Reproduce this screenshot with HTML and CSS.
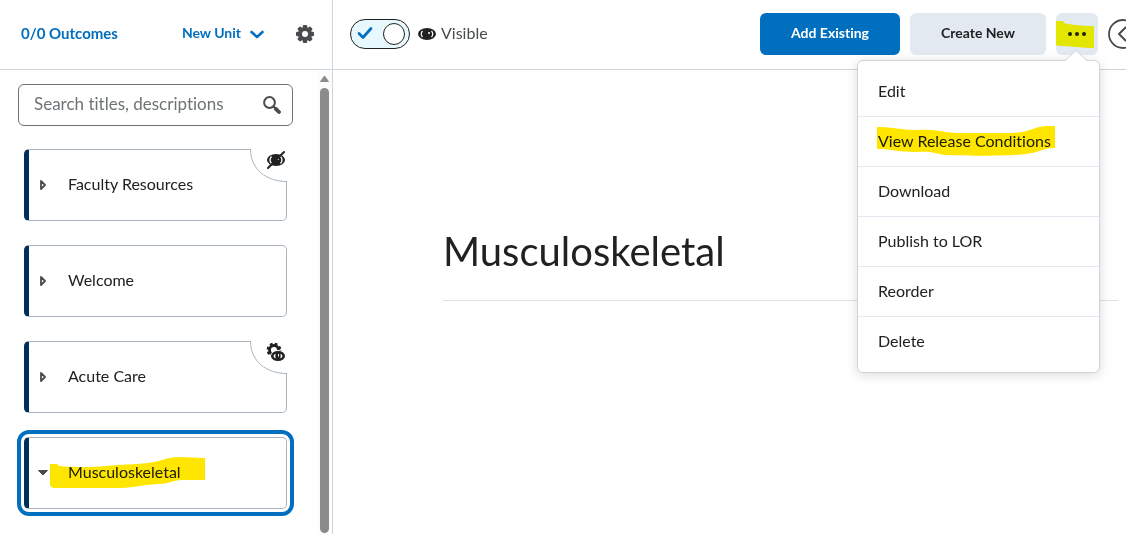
FILE: index.html
```html
<!DOCTYPE html>
<html lang="en">
<head>
<meta charset="utf-8">
<meta name="viewport" content="width=device-width, initial-scale=1">
<title>Musculoskeletal</title>
<link rel="stylesheet" href="styles.css">
</head>
<body>
<div class="app">
  <aside class="sidebar">
    <header class="bar sidebar-bar">
      <a class="outcomes" href="#outcomes">0/0 Outcomes</a>
      <button class="new-unit" type="button"><span class="label">New Unit</span>
        <svg width="14" height="9" viewBox="0 0 14 9"><path d="M1.5 2l5.5 5 5.5-5" fill="none" stroke="#006fbf" stroke-width="2.6" stroke-linecap="round" stroke-linejoin="round"/></svg>
      </button>
      <button class="icon-button" type="button" aria-label="Settings">
        <svg width="18" height="18" viewBox="0 0 18 18"><g fill="#494c4e"><rect x="6.8" width="4.4" height="18" rx="1.2"/><rect x="6.8" width="4.4" height="18" rx="1.2" transform="rotate(45 9 9)"/><rect x="6.8" width="4.4" height="18" rx="1.2" transform="rotate(90 9 9)"/><rect x="6.8" width="4.4" height="18" rx="1.2" transform="rotate(135 9 9)"/><circle cx="9" cy="9" r="7"/></g><circle cx="9" cy="9" r="3" fill="#fff"/></svg>
      </button>
    </header>
    <div class="sidebar-body">
      <div class="sidebar-content">
        <form class="search">
          <input class="search-input" type="text" aria-label="Search titles, descriptions" placeholder="Search titles, descriptions">
          <button class="icon-button" type="button" aria-label="Search">
            <svg width="18" height="18" viewBox="0 0 18 18"><circle cx="6.5" cy="6.5" r="5.4" fill="none" stroke="#494c4e" stroke-width="2"/><path d="M10.5 10.5l2 2" stroke="#494c4e" stroke-width="2"/><path d="M12.8 12.8l3.2 3.2" stroke="#494c4e" stroke-width="3.8" stroke-linecap="round"/></svg>
          </button>
        </form>
        <nav class="units" aria-label="Units">
          <button class="unit" type="button">
            <svg class="caret" width="10" height="12" viewBox="0 0 10 12"><path d="M3 2l4 4-4 4z" fill="#fff" stroke="#494c4e" stroke-width="1.8" stroke-linejoin="round"/></svg>
            <span class="unit-name">Faculty Resources</span>
            <svg class="notch" width="38" height="34" viewBox="0 0 38 34"><path d="M1.500 0H38V32.500C17 32.500 1.500 20 1.500 0z" fill="#fff"/><path d="M1.500 0C1.500 20 17 32.500 38 32.500" fill="none" stroke="#aab4be"/>
              <ellipse cx="27" cy="11" rx="9" ry="6" fill="#202122"/><path d="M22.500 7.500q-3 3.500 0 7M31.500 7.500q3 3.500 0 7" fill="none" stroke="#fff" stroke-width="1.300"/><circle cx="29" cy="10" r="1" fill="#fff"/><path d="M19 19L35 3" stroke="#202122" stroke-width="2" stroke-linecap="round"/></svg>
          </button>
          <button class="unit" type="button">
            <svg class="caret" width="10" height="12" viewBox="0 0 10 12"><path d="M3 2l4 4-4 4z" fill="#fff" stroke="#494c4e" stroke-width="1.8" stroke-linejoin="round"/></svg>
            <span class="unit-name">Welcome</span>
          </button>
          <button class="unit" type="button">
            <svg class="caret" width="10" height="12" viewBox="0 0 10 12"><path d="M3 2l4 4-4 4z" fill="#fff" stroke="#494c4e" stroke-width="1.8" stroke-linejoin="round"/></svg>
            <span class="unit-name">Acute Care</span>
            <svg class="notch" width="38" height="34" viewBox="0 0 38 34"><path d="M1.500 0H38V32.500C17 32.500 1.500 20 1.500 0z" fill="#fff"/><path d="M1.500 0C1.500 20 17 32.500 38 32.500" fill="none" stroke="#aab4be"/>
              <circle cx="25" cy="9" r="4.500" fill="none" stroke="#202122" stroke-width="2.800"/><circle cx="25" cy="9" r="6.300" fill="none" stroke="#202122" stroke-width="2.200" stroke-dasharray="2.750 2.200"/><ellipse cx="29" cy="15" rx="7.600" ry="5.900" fill="#fff"/><ellipse cx="29" cy="15" rx="5.700" ry="3.800" fill="#fff" stroke="#202122" stroke-width="2.600"/><ellipse cx="29" cy="15" rx="2.700" ry="3.400" fill="#202122"/><path d="M29.500 13v2.500" stroke="#fff" stroke-width="1"/></svg>
          </button>
          <button class="unit unit-current" type="button" aria-current="true">
            <svg class="caret" width="10" height="12" viewBox="0 0 10 12"><path d="M.5 3.500h9L5 8z" fill="#494c4e" stroke="#494c4e" stroke-linejoin="round"/></svg>
            <span class="unit-name marked">Musculoskeletal
              <svg class="mark mark-unit" width="155" height="32" viewBox="0 0 155 32"><path d="M0 7H7L9 9C28 11 50 10 68 8C92 7 102 6 112 3Q120 0 130 0L155 1V23H132C122 23 120 27 108 27C90 28 82 31 70 31H5Q0 31 0 27z" fill="#ffe600"/></svg>
            </span>
          </button>
        </nav>
      </div>
      <div class="scroll-track" aria-hidden="true">
        <svg width="9" height="7" viewBox="0 0 9 7"><path d="M4.500 1L8.500 6.500H.500z" fill="#8b8b8b" stroke="#8b8b8b" stroke-linejoin="round"/></svg>
        <div class="scroll-thumb"></div>
      </div>
    </div>
  </aside>

  <main class="main">
    <header class="bar main-bar">
      <label class="visibility">
        <span class="switch">
          <input class="switch-input" type="checkbox" checked>
          <svg class="switch-check" width="16" height="14" viewBox="0 0 16 14"><path d="M2 7.500l4 4L14 2.500" fill="none" stroke="#006fbf" stroke-width="2.700" stroke-linecap="round" stroke-linejoin="round"/></svg>
        </span>
        <svg width="18" height="12" viewBox="0 0 18 12"><ellipse cx="9" cy="6" rx="9" ry="6" fill="#202122"/><path d="M4.500 3q-2.500 3 0 6M13.500 3q2.500 3 0 6" fill="none" stroke="#fff" stroke-width="1.200"/><circle cx="11" cy="5" r="1" fill="#fff"/></svg>
        <span class="label">Visible</span>
      </label>
      <div class="actions">
        <button class="button button-primary" type="button">Add Existing</button>
        <button class="button button-create" type="button">Create New</button>
        <div class="more">
          <button class="button button-more" type="button" aria-label="More actions" aria-expanded="true">
            <svg width="18" height="4" viewBox="0 0 18 4"><g fill="#202122"><circle cx="2" cy="2" r="2"/><circle cx="9" cy="2" r="2"/><circle cx="16" cy="2" r="2"/></g></svg>
            <svg class="mark mark-more" width="38" height="28" viewBox="0 0 38 28"><path d="M0 0H7L8 2C16 4 24 5 38 5V27C24 27 16 25 3 25L0 24z" fill="#fffc00"/></svg>
          </button>
          <div class="menu" role="menu">
            <svg class="menu-pointer" width="22" height="12" viewBox="0 0 22 12"><path d="M0 11L11 .500L22 11V12H0z" fill="#fff"/><path d="M0 10.500L11 .500L22 10.500" fill="none" stroke="#cdd5dc"/></svg>
            <button class="menu-item" type="button" role="menuitem">Edit</button>
            <button class="menu-item" type="button" role="menuitem"><span class="marked">View Release Conditions
              <svg class="mark mark-menu" width="178" height="30" viewBox="0 0 178 30"><path d="M0 1C18 1 22 4 40 4C64 3 64 7 82 7H132C154 7 156 0 172 0H178V22C164 22 162 27 148 28C134 30 86 30 68 29C56 27 54 25 40 26C18 26 16 23 0 23z" fill="#ffe600"/></svg>
            </span></button>
            <button class="menu-item" type="button" role="menuitem">Download</button>
            <button class="menu-item" type="button" role="menuitem">Publish to LOR</button>
            <button class="menu-item" type="button" role="menuitem">Reorder</button>
            <button class="menu-item" type="button" role="menuitem">Delete</button>
          </div>
        </div>
        <button class="icon-button previous" type="button" aria-label="Previous">
          <svg width="30" height="30" viewBox="0 0 30 30"><circle cx="15" cy="15" r="14" fill="#fff" stroke="#494c4e" stroke-width="1.800"/><path d="M17.500 8.500L11 15l6.500 6.500" fill="none" stroke="#494c4e" stroke-width="2" stroke-linecap="round" stroke-linejoin="round"/></svg>
        </button>
      </div>
    </header>
    <section class="content">
      <h1 class="title">Musculoskeletal</h1>
    </section>
  </main>
</div>
</body>
</html>
```
FILE: styles.css
```css
* {
  box-sizing: border-box;
}

body {
  margin: 0;
  background: #fff;
  color: #202122;
  font: 16px/24px Lato, "Liberation Sans", sans-serif;
  font-variant-ligatures: none;
}

button,
input {
  margin: 0;
  color: inherit;
  font: inherit;
  font-variant-ligatures: none;
}

button {
  padding: 0;
  border: 0;
  background: none;
  cursor: pointer;
}

svg {
  display: block;
  flex: none;
}

.app {
  display: grid;
  grid-template-columns: 333px 1fr;
  min-height: 100vh;
  overflow: hidden;
}

.bar {
  display: flex;
  align-items: center;
  height: 70px;
  padding-bottom: 1px;
  border-bottom: 1px solid #cdd5dc;
}

.label {
  padding-bottom: 2px;
}

/* Sidebar */

.sidebar {
  display: flex;
  flex-direction: column;
  border-right: 1px solid #cdd5dc;
}

.sidebar-bar {
  padding-right: 18px;
  padding-left: 21px;
  color: #006fbf;
  font-size: 15px;
  font-weight: 700;
}

.outcomes {
  margin-right: auto;
  padding-bottom: 2px;
  color: inherit;
  text-decoration: none;
}

.new-unit {
  display: flex;
  align-items: center;
  gap: 9px;
  margin-right: 32px;
  font-size: 14px;
}

.sidebar-body {
  display: flex;
  flex: 1;
}

.sidebar-content {
  flex: 1;
  padding: 14px 24px 18px 18px;
}

.search {
  display: flex;
  align-items: center;
  height: 42px;
  padding: 0 11px 0 15px;
  border: 1px solid #6e7376;
  border-radius: 6px;
}

.search-input {
  flex: 1;
  min-width: 0;
  padding: 0 0 2px;
  border: 0;
  outline: 0;
  background: none;
  font-size: 17px;
}

.search-input::placeholder {
  color: #6e7376;
  opacity: 1;
}

.units {
  display: flex;
  flex-direction: column;
  gap: 24px;
  padding: 23px 6px 0;
}

.unit {
  position: relative;
  display: flex;
  align-items: center;
  gap: 20px;
  height: 72px;
  padding-left: 9px;
  border: 1px solid #aab4be;
  border-left: 5px solid #00305a;
  border-radius: 5px;
  text-align: left;
}

.unit-name {
  padding-bottom: 2px;
}

.unit-current {
  outline: 4px solid #006fbf;
  outline-offset: 3px;
}

.notch {
  position: absolute;
  top: -1px;
  right: -1px;
}

.scroll-track {
  display: flex;
  flex-direction: column;
  align-items: center;
  gap: 6px;
  width: 15px;
  padding: 5px 0 1px;
  background: #fcfcfc;
}

.scroll-thumb {
  flex: 1;
  width: 9px;
  border-radius: 5px;
  background: #8b8b8b;
}

/* Highlighter strokes */

.marked {
  position: relative;
}

.mark {
  position: absolute;
  mix-blend-mode: multiply;
}

.mark-unit {
  top: -3px;
  left: -18px;
}

.mark-more {
  top: 8px;
  left: 0;
}

.mark-menu {
  top: -5px;
  left: -1px;
}

/* Main */

.main {
  min-width: 0;
}

.main-bar {
  justify-content: space-between;
  padding-left: 17px;
}

.visibility {
  display: flex;
  align-items: center;
  gap: 8px;
  color: #494c4e;
}

.visibility .label {
  margin-left: -3px;
}

.switch {
  position: relative;
  display: flex;
}

.switch-input {
  display: flex;
  align-items: center;
  justify-content: flex-end;
  width: 60px;
  height: 30px;
  margin: 0;
  padding: 0 4px;
  appearance: none;
  border: 1px solid #202122;
  border-radius: 15px;
  background: #e8f8ff;
}

.switch-input::after {
  box-sizing: border-box;
  width: 22px;
  height: 22px;
  border: 1px solid #202122;
  border-radius: 50%;
  background: #fff;
  content: "";
}

.switch-check {
  position: absolute;
  top: 7px;
  left: 7px;
}

.actions {
  display: flex;
  align-items: center;
  gap: 10px;
  margin-right: -12px;
}

.button {
  height: 42px;
  border-radius: 6px;
  background: #e3e9f1;
  font-size: 14px;
  font-weight: 700;
}

.button-primary {
  width: 140px;
  padding-bottom: 2px;
  background: #006fbf;
  color: #fff;
}

.button-create {
  width: 136px;
  padding-bottom: 2px;
}

.more {
  position: relative;
}

.button-more {
  position: relative;
  display: flex;
  align-items: center;
  justify-content: center;
  width: 42px;
}

.menu {
  position: absolute;
  top: 47px;
  right: -2px;
  z-index: 1;
  width: 243px;
  padding: 6px 0 5px;
  border: 1px solid #cdd5dc;
  border-radius: 6px;
  background: #fff;
  box-shadow: 0 2px 12px rgba(0, 0, 0, 0.15);
}

.menu-pointer {
  position: absolute;
  top: -11px;
  right: 12px;
}

.menu-item {
  display: block;
  width: 100%;
  height: 50px;
  padding: 0 20px 2px;
  border-bottom: 1px solid #e3e9f1;
  text-align: left;
}

.menu-item:last-child {
  border-bottom: 0;
}

.content {
  padding: 149px 8px 0 110px;
}

.title {
  margin: 0;
  padding-bottom: 17px;
  border-bottom: 1px solid #e0e0e0;
  font-size: 40px;
  font-weight: 400;
  line-height: 64px;
}
```
